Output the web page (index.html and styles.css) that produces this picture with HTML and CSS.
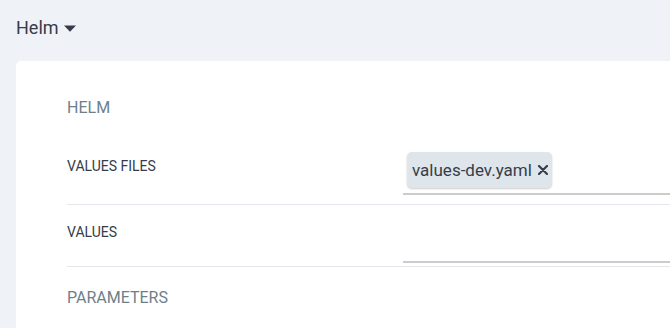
FILE: index.html
```html
<!DOCTYPE html>
<html lang="en">
<head>
  <meta charset="UTF-8" />
  <title>Helm</title>
  <meta name="viewport" content="width=device-width, initial-scale=1.0" />
  <link rel="stylesheet" href="styles.css">
</head>
<body>

  <div class="source-type">
    <span>Helm</span>
    <svg class="caret" width="12" height="7" viewBox="0 0 12 7"><path d="M0 0.5h12L6 6.8z" fill="#363c4a"/></svg>
  </div>

  <div class="card">
    <div class="section-title">HELM</div>

    <div class="field-row">
      <label class="field-label">VALUES FILES</label>
      <div class="field-value">
        <div class="tags">
          <span class="tag">values-dev.yaml
            <svg class="tag-remove" width="10" height="10" viewBox="0 0 10 10"><path d="M1 1L9 9M9 1L1 9" stroke="#363c4a" stroke-width="2.2" stroke-linecap="round"/></svg>
          </span>
        </div>
      </div>
    </div>

    <div class="field-row">
      <label class="field-label">VALUES</label>
      <div class="field-value empty"></div>
    </div>

    <div class="section-title params">PARAMETERS</div>
  </div>

</body>
</html>
```

FILE: styles.css
```css
html, body {
  overflow: hidden;
}

body {
  font-family: Roboto, "Liberation Sans", sans-serif;
  background-color: #eff2f6;
  color: #363c4a;
  margin: 0;
  padding: 16px 0 0 16px;
  width: 654px;
  height: 312px;
}

.source-type {
  display: flex;
  align-items: center;
  font-size: 18px;
  line-height: 24px;
  height: 24px;
  gap: 5px;
}

.caret {
  margin-top: 1px;
}

.card {
  margin-top: 21px;
  background: #fff;
  border-radius: 5px 0 0 0;
  padding: 35px 0 18px 51px;
}

.section-title {
  font-size: 16px;
  line-height: 24px;
  color: #6d7f8b;
  margin-bottom: 19px;
}

.section-title.params {
  margin: 0;
  padding-top: 19px;
}

.field-row {
  display: grid;
  grid-template-columns: 336px 1fr;
  align-items: start;
  border-bottom: 1px solid #e4e8ed;
}

.field-label {
  font-size: 14px;
  line-height: 20px;
  padding-top: 17px;
}

.field-value {
  border-bottom: 2px solid #cccccc;
  margin-bottom: 9px;
}

.field-value.empty {
  height: 56px;
  margin-bottom: 3px;
}

.tags {
  padding: 13px 0 5px 4px;
}

.tag {
  display: inline-flex;
  align-items: center;
  gap: 6px;
  height: 36px;
  padding: 0 4px 0 5px;
  box-sizing: border-box;
  background-color: #dee6eb;
  border-radius: 5px;
  box-shadow: 0 1px 2px rgba(0,0,0,0.2);
  font-size: 17px;
}

.tag-remove {
  cursor: pointer;
}
```
